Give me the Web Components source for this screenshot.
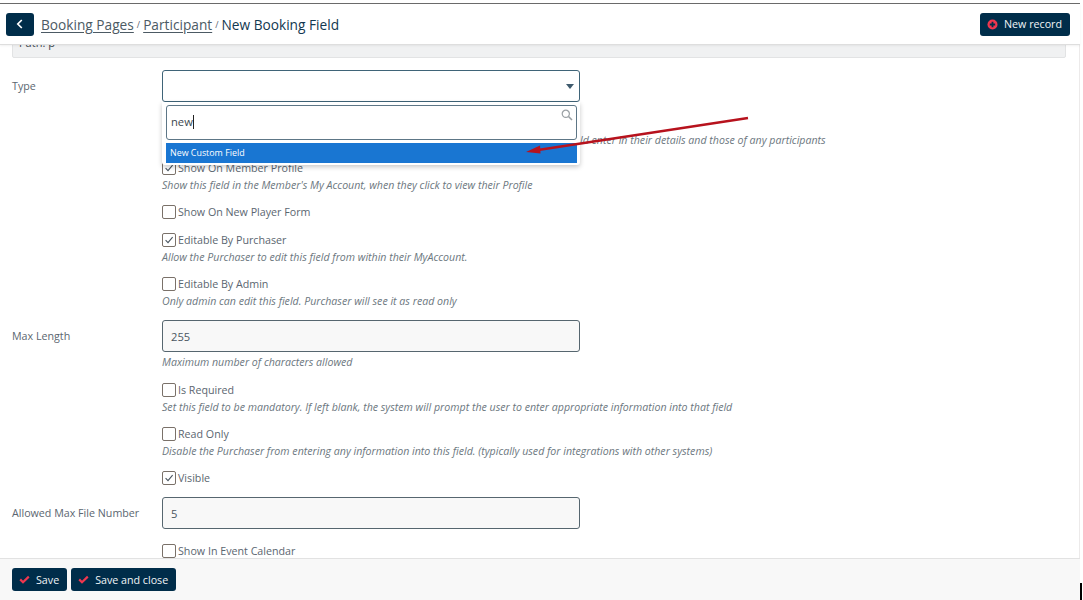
<!DOCTYPE html>
<html>
<head>
<meta charset="utf-8">
<title>New Booking Field</title>
<style>
  html, body { margin: 0; height: 100%; background: #fff; overflow: hidden; }
  body { font-family: "Open Sans", sans-serif; font-size: 12px; color: #5b6670; }
</style>
</head>
<body>
<booking-app>
  <app-header slot="header">
    <nav-crumb href="#">Booking Pages</nav-crumb>
    <nav-crumb href="#">Participant</nav-crumb>
    <nav-crumb>New Booking Field</nav-crumb>
    <app-button slot="action" icon="plus">New record</app-button>
  </app-header>

  <path-box>Path: p</path-box>

  <form-row label="Type" top="12">
    <select-box></select-box>
    <search-dropdown value="new" option="New Custom Field"></search-dropdown>
  </form-row>

  <check-row top="29" indent="418" hint="ld enter in their details and those of any participants"></check-row>
  <check-row top="11" checked label="Show On Member Profile" hint="Show this field in the Member's My Account, when they click to view their Profile"></check-row>
  <check-row top="10" label="Show On New Player Form"></check-row>
  <check-row top="11" checked label="Editable By Purchaser" hint="Allow the Purchaser to edit this field from within their MyAccount."></check-row>
  <check-row top="10" label="Editable By Admin" hint="Only admin can edit this field. Purchaser will see it as read only"></check-row>

  <form-row label="Max Length" top="11"><text-box value="255"></text-box></form-row>
  <check-row top="1" hint="Maximum number of characters allowed"></check-row>

  <check-row top="11" label="Is Required" hint="Set this field to be mandatory. If left blank, the system will prompt the user to enter appropriate information into that field"></check-row>
  <check-row top="10" label="Read Only" hint="Disable the Purchaser from entering any information into this field. (typically used for integrations with other systems)"></check-row>
  <check-row top="10" checked label="Visible"></check-row>

  <form-row label="Allowed Max File Number" top="11"><text-box value="5"></text-box></form-row>
  <check-row top="13" label="Show In Event Calendar"></check-row>

  <app-button slot="footer" icon="check">Save</app-button>
  <app-button slot="footer" icon="check">Save and close</app-button>
  <red-arrow slot="overlay"></red-arrow>
</booking-app>

<script>
class BookingApp extends HTMLElement {
  constructor() {
    super();
    this.attachShadow({ mode: 'open' });
    this.shadowRoot.innerHTML = `
      <style>
        :host { display: block; position: relative; width: 1080px; height: 600px; box-sizing: border-box; padding-top: 3px; background: #fff; }
        .shell { display: flex; flex-direction: column; height: 100%; border-top: 1px solid #6b6b6b; box-sizing: border-box; }
        .main { flex: 1; min-height: 0; overflow: hidden; padding: 0 13px 0 12px; border-right: 1px solid #eceaea; }
        footer { flex: none; height: 42px; display: flex; gap: 4px; align-items: flex-start; padding: 9px 12px 0; box-sizing: border-box;
          background: #f8f8f8; border-top: 1px solid #e2e2e2; }
        .edge { position: absolute; left: 1080px; top: 583px; width: 2px; height: 17px; background: #000; }
      </style>
      <div class="shell">
        <slot name="header"></slot>
        <div class="main"><slot></slot></div>
        <footer><slot name="footer"></slot></footer>
      </div>
      <slot name="overlay"></slot>
      <div class="edge"></div>`;
  }
}

class AppHeader extends HTMLElement {
  constructor() {
    super();
    this.attachShadow({ mode: 'open' });
    this.shadowRoot.innerHTML = `
      <style>
        :host { display: flex; align-items: center; position: relative; z-index: 2; height: 41px; box-sizing: border-box; padding: 0 10px 0 6px;
          background: #fff; border-bottom: 1px solid #dedede; box-shadow: 0 1px 2px rgba(0,0,0,.06); }
        .back { width: 28px; height: 23px; margin-right: 7px; border-radius: 3px; background: #002d4a; display: flex; align-items: center; justify-content: center; }
        .crumbs { flex: 1; display: flex; align-items: center; }
      </style>
      <div class="back">
        <svg width="8" height="11" viewBox="0 0 8 11"><path d="M5.8 1 L1.8 5 L5.8 9" fill="none" stroke="#fff" stroke-width="1.7"/></svg>
      </div>
      <div class="crumbs"><slot></slot></div>
      <slot name="action"></slot>`;
  }
}

class NavCrumb extends HTMLElement {
  constructor() {
    super();
    this.attachShadow({ mode: 'open' });
    const linked = this.hasAttribute('href');
    this.shadowRoot.innerHTML = `
      <style>
        :host { display: inline-flex; align-items: center; font-size: 13.7px; color: #12384f; white-space: nowrap; }
        .link { color: #4c5a64; text-decoration: underline; text-underline-offset: 2px; }
        .sep { font-size: 9px; margin: 0 3px; color: #5b6670; }
      </style>
      <span class="${linked ? 'link' : ''}"><slot></slot></span>${linked ? '<span class="sep">/</span>' : ''}`;
  }
}

class AppButton extends HTMLElement {
  constructor() {
    super();
    this.attachShadow({ mode: 'open' });
    const icons = {
      plus: `<svg width="11" height="11" viewBox="0 0 11 11"><circle cx="5.5" cy="5.5" r="5" fill="#f0374f"/><path d="M5.5 2.8v5.4M2.8 5.5h5.4" stroke="#002d4a" stroke-width="1.8"/></svg>`,
      check: `<svg width="11" height="9" viewBox="0 0 11 9"><path d="M1.2 4.4 L4 7.2 L9.8 1.6" fill="none" stroke="#f0374f" stroke-width="2.2"/></svg>`
    };
    this.shadowRoot.innerHTML = `
      <style>
        :host { display: inline-flex; align-items: center; height: 23px; box-sizing: border-box; padding: 0 8px 0 7px; gap: 6px;
          background: #002d4a; color: #f1f4f6; border-radius: 3px; font-size: 10.7px; white-space: nowrap; }
        svg { display: block; }
      </style>
      ${icons[this.getAttribute('icon')]}<slot></slot>`;
  }
}

class PathBox extends HTMLElement {
  constructor() {
    super();
    this.attachShadow({ mode: 'open' });
    this.shadowRoot.innerHTML = `
      <style>
        :host { display: block; height: 30px; margin-top: -17px; box-sizing: border-box; padding: 6px 6px 0; font-size: 11px; color: #3c4850;
          background: #f0f1f2; border: 1px solid #e2e3e4; border-radius: 2px; }
      </style><slot></slot>`;
  }
}

class FormRow extends HTMLElement {
  constructor() {
    super();
    this.attachShadow({ mode: 'open' });
    const top = this.getAttribute('top') || 12;
    this.shadowRoot.innerHTML = `
      <style>
        :host { display: grid; grid-template-columns: 150px 418px; margin-top: ${top}px; }
        label { font-size: 10.7px; color: #5b6670; align-self: center; white-space: nowrap; padding-bottom: 1px; }
        .control { position: relative; height: 32px; }
      </style>
      <label>${this.getAttribute('label')}</label>
      <div class="control"><slot></slot></div>`;
  }
}

class SelectBox extends HTMLElement {
  constructor() {
    super();
    this.attachShadow({ mode: 'open' });
    this.shadowRoot.innerHTML = `
      <style>
        :host { display: flex; align-items: center; justify-content: flex-end; height: 32px; box-sizing: border-box; padding-right: 5px;
          background: #fff; border: 1px solid #3f6478; border-radius: 3px; }
        i { width: 0; height: 0; border: 4px solid transparent; border-top: 5px solid #3f5a6d; border-bottom: 0; }
      </style><i></i>`;
  }
}

class TextBox extends HTMLElement {
  constructor() {
    super();
    this.attachShadow({ mode: 'open' });
    this.shadowRoot.innerHTML = `
      <style>
        :host { display: flex; align-items: center; height: 32px; box-sizing: border-box; padding-left: 8px; font-size: 11.2px; color: #4a5660;
          background: #f8f8f8; border: 1px solid #56666f; border-radius: 3px; }
      </style>${this.getAttribute('value')}`;
  }
}

class SearchDropdown extends HTMLElement {
  constructor() {
    super();
    this.attachShadow({ mode: 'open' });
    this.shadowRoot.innerHTML = `
      <style>
        :host { display: block; position: absolute; left: 0; top: 32px; width: 418px; height: 63px; box-sizing: border-box; padding: 3px 3px 0 4px; z-index: 1;
          background: #fff; border-radius: 0 0 3px 3px; box-shadow: 0 2px 5px rgba(0,0,0,.22); }
        .search { position: relative; height: 35px; box-sizing: border-box; padding: 8px 0 0 4px; font-size: 11.2px; color: #3c4850;
          border: 1px solid #5d7686; border-radius: 3px; background: #fff; }
        .caret { display: inline-block; width: 1px; height: 14px; background: #222; vertical-align: -3px; }
        svg { position: absolute; right: 3px; top: 3px; }
        .option { height: 20px; margin-top: 3px; padding-left: 4px; font-size: 8.9px; line-height: 20px; color: #fff; background: #1976d2; }
      </style>
      <div class="search">${this.getAttribute('value')}<span class="caret"></span>
        <svg width="12" height="12" viewBox="0 0 12 12"><circle cx="4.8" cy="4.8" r="3.6" fill="none" stroke="#9aa0a4" stroke-width="1.2"/><path d="M7.5 7.5 L11 11" stroke="#9aa0a4" stroke-width="1.6"/></svg>
      </div>
      <div class="option">${this.getAttribute('option')}</div>`;
  }
}

class CheckRow extends HTMLElement {
  constructor() {
    super();
    this.attachShadow({ mode: 'open' });
    const top = this.getAttribute('top') || 10;
    const indent = Number(this.getAttribute('indent') || 0);
    const hint = this.getAttribute('hint');
    const label = this.getAttribute('label');
    const box = label === null ? '' : `
      <div class="line">
        <span class="box">${this.hasAttribute('checked') ? '<svg width="12" height="12" viewBox="0 0 12 12"><path d="M2.6 6.2 L5 8.6 L9.6 3.2" fill="none" stroke="#4a5660" stroke-width="1.1"/></svg>' : ''}</span>
        <span>${label}</span>
      </div>`;
    this.shadowRoot.innerHTML = `
      <style>
        :host { display: block; margin: ${top}px 0 0 ${150 + indent}px; }
        .line { display: flex; align-items: center; gap: 2px; height: 17px; font-size: 10.7px; color: #5b6670; white-space: nowrap; }
        .box { flex: none; width: 12px; height: 12px; border: 1px solid #7a7169; border-radius: 2px; display: flex; background: #fff; }
        .hint { height: 16px; padding-top: 1px; line-height: 17px; font-size: 10.62px; font-style: italic; color: #6c7780; white-space: nowrap; }
      </style>
      ${box}${hint ? `<div class="hint">${hint}</div>` : ''}`;
  }
}

class RedArrow extends HTMLElement {
  constructor() {
    super();
    this.attachShadow({ mode: 'open' });
    this.shadowRoot.innerHTML = `
      <style>
        :host { display: block; position: absolute; left: 520px; top: 110px; width: 235px; height: 50px; z-index: 5; pointer-events: none; }
      </style>
      <svg width="235" height="50" viewBox="0 0 235 50">
        <path d="M228 8 L18 40" stroke="#b7121d" stroke-width="2.6" fill="none"/>
        <path d="M6 42 L20 35.5 L20.5 43.5 Z" fill="#b7121d"/>
      </svg>`;
  }
}

customElements.define('booking-app', BookingApp);
customElements.define('app-header', AppHeader);
customElements.define('nav-crumb', NavCrumb);
customElements.define('app-button', AppButton);
customElements.define('path-box', PathBox);
customElements.define('form-row', FormRow);
customElements.define('select-box', SelectBox);
customElements.define('text-box', TextBox);
customElements.define('search-dropdown', SearchDropdown);
customElements.define('check-row', CheckRow);
customElements.define('red-arrow', RedArrow);
</script>
</body>
</html>
